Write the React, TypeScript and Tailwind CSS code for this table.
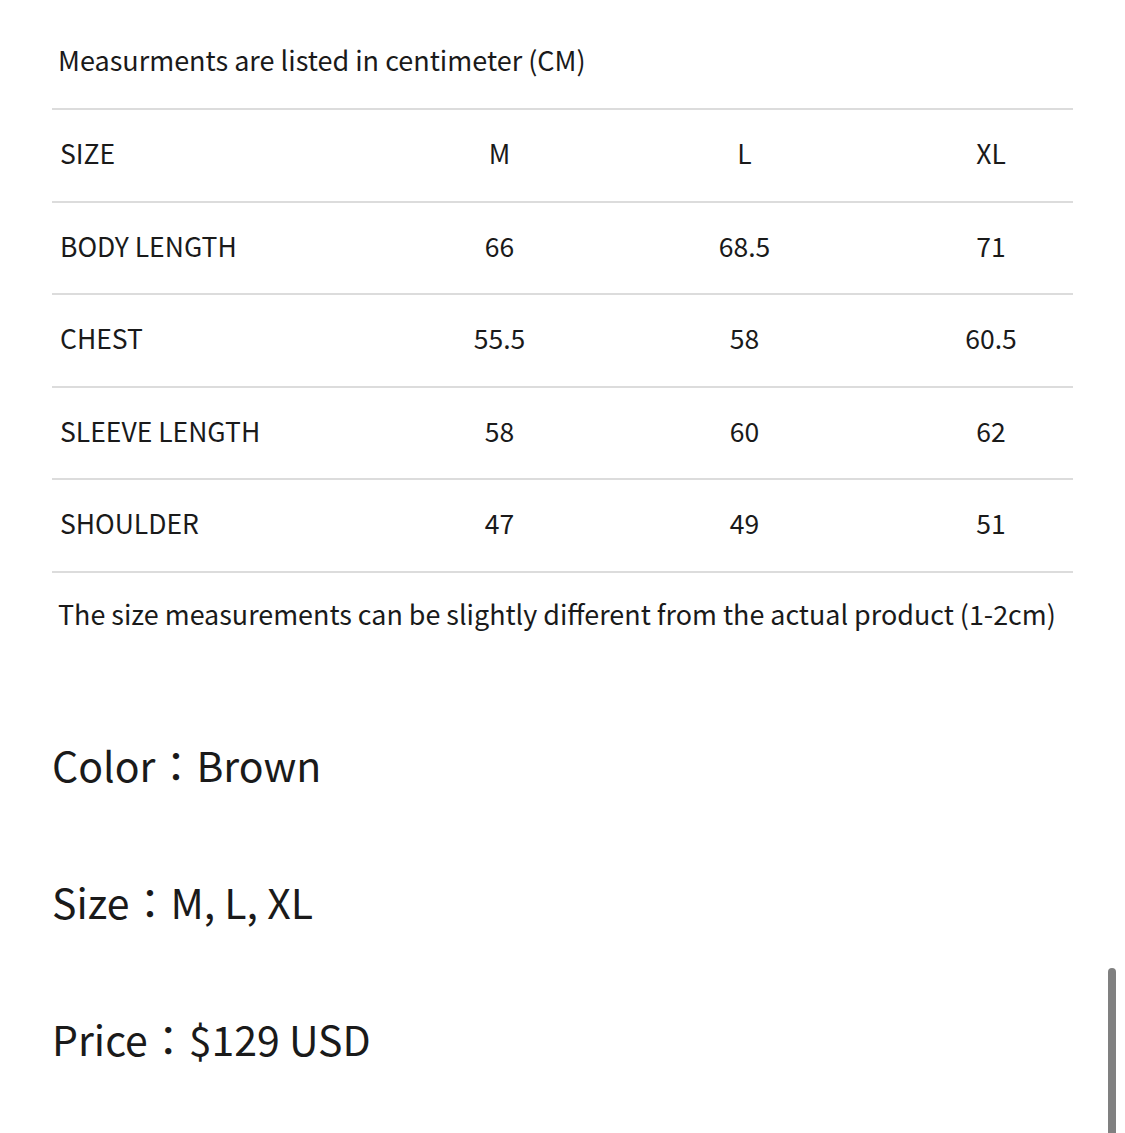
const rows = [
  { label: "SIZE", values: ["M", "L", "XL"] },
  { label: "BODY LENGTH", values: ["66", "68.5", "71"] },
  { label: "CHEST", values: ["55.5", "58", "60.5"] },
  { label: "SLEEVE LENGTH", values: ["58", "60", "62"] },
  { label: "SHOULDER", values: ["47", "49", "51"] },
];

export default function App() {
  return (
    <div
      className="relative min-h-[1133px] w-[1125px] overflow-hidden bg-white text-[#1a1a1a]"
      style={{ fontFamily: '"Noto Sans CJK JP", "Noto Sans", sans-serif' }}
    >
      <div className="px-[52px] pt-[40px]">
        <p className="pl-[6px] text-[27px] leading-[40px]">Measurments are listed in centimeter (CM)</p>

        <div className="mt-[28px] w-[1021px] border-t-2 border-[#dcdcdc]">
          {rows.map((row) => (
            <div
              key={row.label}
              className="grid h-[92.6px] grid-cols-[325px_245px_245px_1fr] items-center border-b-2 border-[#dcdcdc] pb-[5px] text-[26.5px]"
            >
              <span className="pl-[8px]">{row.label}</span>
              <span className="text-center">{row.values[0]}</span>
              <span className="text-center">{row.values[1]}</span>
              <span className="pl-[42px] text-center">{row.values[2]}</span>
            </div>
          ))}
        </div>

        <p className="mt-[21px] pl-[6px] text-[26.9px] leading-[40px]">
          The size measurements can be slightly different from the actual product (1-2cm)
        </p>

        <div className="mt-[102px] flex flex-col gap-[81px] text-[41px] leading-[56px]">
          <p>Color：Brown</p>
          <p>Size：M, L, XL</p>
          <p>Price：$129 USD</p>
        </div>
      </div>

      <div className="absolute left-[1108px] top-[968px] h-[200px] w-[8px] rounded-t-full bg-[#808080]" />
    </div>
  );
}
